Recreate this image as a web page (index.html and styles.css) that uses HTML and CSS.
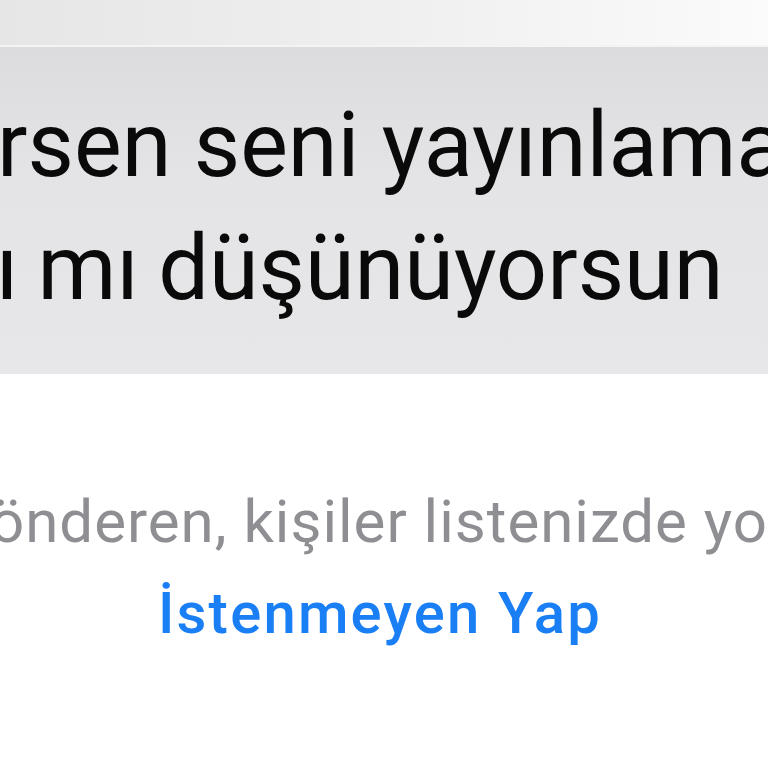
FILE: index.html
```html
<!DOCTYPE html>
<html lang="tr">
<head>
<meta charset="utf-8">
<link rel="stylesheet" href="styles.css">
</head>
<body>
<div class="screen">
  <div class="topband"></div>
  <div class="bubble">
    <div class="line line1">rsen seni yayınlama</div>
    <div class="line line2">ı mı düşünüyorsun</div>
  </div>
  <div class="notice">
    <div class="sender">önderen, kişiler listenizde yok</div>
    <div class="action">İstenmeyen Yap</div>
  </div>
</div>
</body>
</html>
```
FILE: styles.css
```css
html, body {
  margin: 0;
  padding: 0;
  background: #ffffff;
}
.screen {
  width: 768px;
  height: 768px;
  overflow: hidden;
  font-family: Roboto, "Liberation Sans", sans-serif;
}
.topband {
  height: 45px;
  background: linear-gradient(90deg, #e6e6e6 0%, #efefef 50%, #fbfbfb 100%);
  border-bottom: 2px solid #f4f4f4;
}
.bubble {
  height: 327px;
  background: linear-gradient(180deg, #dcdcdf 0%, #e4e4e7 40%, #e7e7e9 100%);
  display: flex;
  flex-direction: column;
  padding-top: 37px;
  box-sizing: border-box;
}
.line {
  white-space: nowrap;
  font-size: 90px;
  line-height: 123px;
  color: #0a0a0a;
}
.line1 {
  margin-left: -3px;
}
.line2 {
  margin-left: -4px;
  word-spacing: -3px;
}
.notice {
  display: flex;
  flex-direction: column;
  align-items: flex-start;
  padding-top: 113px;
}
.sender {
  white-space: nowrap;
  font-size: 60px;
  line-height: 70px;
  letter-spacing: 1px;
  color: #8e8e93;
  margin-left: -10px;
}
.action {
  align-self: center;
  margin-top: 24px;
  margin-left: -8px;
  font-size: 58px;
  font-weight: 500;
  line-height: 64px;
  letter-spacing: 2.2px;
  color: #1a7ef5;
  white-space: nowrap;
}
```
